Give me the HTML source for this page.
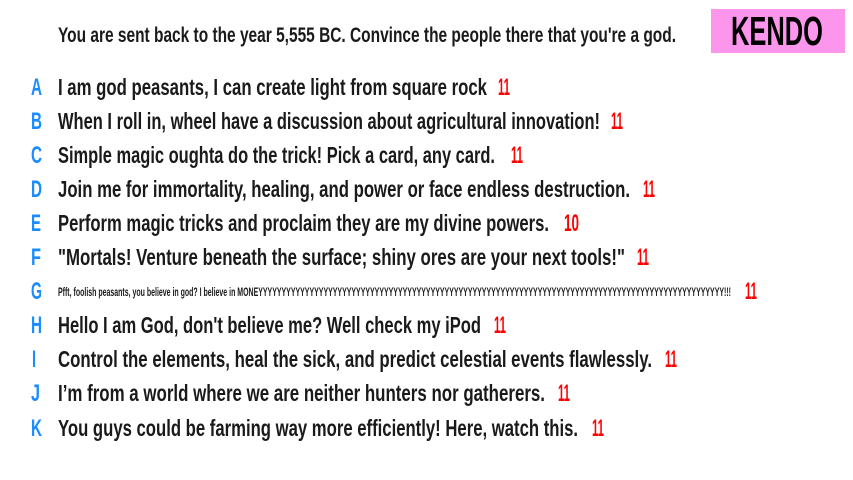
<!DOCTYPE html>
<html><head><meta charset="utf-8"><style>
html,body{margin:0;padding:0;background:#fff;width:853px;height:480px;overflow:hidden}
svg{display:block}
text{font-family:"Liberation Sans Narrow","Liberation Sans",sans-serif;font-weight:bold}
.q{fill:#1a1a1a;font-size:23px}
.l{fill:#1a8cff;font-size:24px}
.n{fill:#ff0000;font-size:24px}
</style></head><body>
<svg width="853" height="480" viewBox="0 0 853 480">
<text x="58" y="42" class="q" style="font-size:21px" textLength="618" lengthAdjust="spacingAndGlyphs">You are sent back to the year 5,555 BC. Convince the people there that you're a god.</text>
<rect x="711" y="9" width="134" height="44" fill="#fb96ec"/>
<text x="731" y="45" style="font-size:41px;fill:#000" textLength="92" lengthAdjust="spacingAndGlyphs">KENDO</text>

<text x="31" y="95" class="l" textLength="11" lengthAdjust="spacingAndGlyphs">A</text>
<text x="58" y="95" class="q" textLength="429" lengthAdjust="spacingAndGlyphs">I am god peasants, I can create light from square rock</text>
<text x="498" y="95" class="n" textLength="12" lengthAdjust="spacingAndGlyphs">11</text>

<text x="31" y="129" class="l" textLength="11" lengthAdjust="spacingAndGlyphs">B</text>
<text x="58" y="129" class="q" textLength="542" lengthAdjust="spacingAndGlyphs">When I roll in, wheel have a discussion about agricultural innovation!</text>
<text x="611" y="129" class="n" textLength="12" lengthAdjust="spacingAndGlyphs">11</text>

<text x="31" y="163" class="l" textLength="11" lengthAdjust="spacingAndGlyphs">C</text>
<text x="58" y="163" class="q" textLength="437" lengthAdjust="spacingAndGlyphs">Simple magic oughta do the trick! Pick a card, any card.</text>
<text x="511" y="163" class="n" textLength="12" lengthAdjust="spacingAndGlyphs">11</text>

<text x="31" y="197" class="l" textLength="11" lengthAdjust="spacingAndGlyphs">D</text>
<text x="58" y="197" class="q" textLength="572" lengthAdjust="spacingAndGlyphs">Join me for immortality, healing, and power or face endless destruction.</text>
<text x="643" y="197" class="n" textLength="12" lengthAdjust="spacingAndGlyphs">11</text>

<text x="31" y="231" class="l" textLength="10" lengthAdjust="spacingAndGlyphs">E</text>
<text x="58" y="231" class="q" textLength="491" lengthAdjust="spacingAndGlyphs">Perform magic tricks and proclaim they are my divine powers.</text>
<text x="564" y="231" class="n" textLength="15" lengthAdjust="spacingAndGlyphs">10</text>

<text x="31" y="265" class="l" textLength="10" lengthAdjust="spacingAndGlyphs">F</text>
<text x="58" y="265" class="q" textLength="567" lengthAdjust="spacingAndGlyphs">"Mortals! Venture beneath the surface; shiny ores are your next tools!"</text>
<text x="637" y="265" class="n" textLength="12" lengthAdjust="spacingAndGlyphs">11</text>

<text x="31" y="299" class="l" textLength="11" lengthAdjust="spacingAndGlyphs">G</text>
<text x="58" y="296" class="q" style="font-size:12px" textLength="673" lengthAdjust="spacingAndGlyphs">Pfft, foolish peasants, you believe in god? I believe in MONEYYYYYYYYYYYYYYYYYYYYYYYYYYYYYYYYYYYYYYYYYYYYYYYYYYYYYYYYYYYYYYYYYYYYYYYYYYYYYYYYYYYYYYYYYYYYYYYYYYYY!!!</text>
<text x="745" y="299" class="n" textLength="12" lengthAdjust="spacingAndGlyphs">11</text>

<text x="31" y="333" class="l" textLength="11" lengthAdjust="spacingAndGlyphs">H</text>
<text x="58" y="333" class="q" textLength="423" lengthAdjust="spacingAndGlyphs">Hello I am God, don't believe me? Well check my iPod</text>
<text x="494" y="333" class="n" textLength="12" lengthAdjust="spacingAndGlyphs">11</text>

<text x="32" y="367" class="l" textLength="4" lengthAdjust="spacingAndGlyphs">I</text>
<text x="58" y="367" class="q" textLength="594" lengthAdjust="spacingAndGlyphs">Control the elements, heal the sick, and predict celestial events flawlessly.</text>
<text x="665" y="367" class="n" textLength="12" lengthAdjust="spacingAndGlyphs">11</text>

<text x="31" y="401" class="l" textLength="9" lengthAdjust="spacingAndGlyphs">J</text>
<text x="58" y="401" class="q" textLength="487" lengthAdjust="spacingAndGlyphs">I’m from a world where we are neither hunters nor gatherers.</text>
<text x="558" y="401" class="n" textLength="12" lengthAdjust="spacingAndGlyphs">11</text>

<text x="31" y="436" class="l" textLength="11" lengthAdjust="spacingAndGlyphs">K</text>
<text x="58" y="436" class="q" textLength="520" lengthAdjust="spacingAndGlyphs">You guys could be farming way more efficiently! Here, watch this.</text>
<text x="592" y="436" class="n" textLength="12" lengthAdjust="spacingAndGlyphs">11</text>
</svg>
</body></html>
